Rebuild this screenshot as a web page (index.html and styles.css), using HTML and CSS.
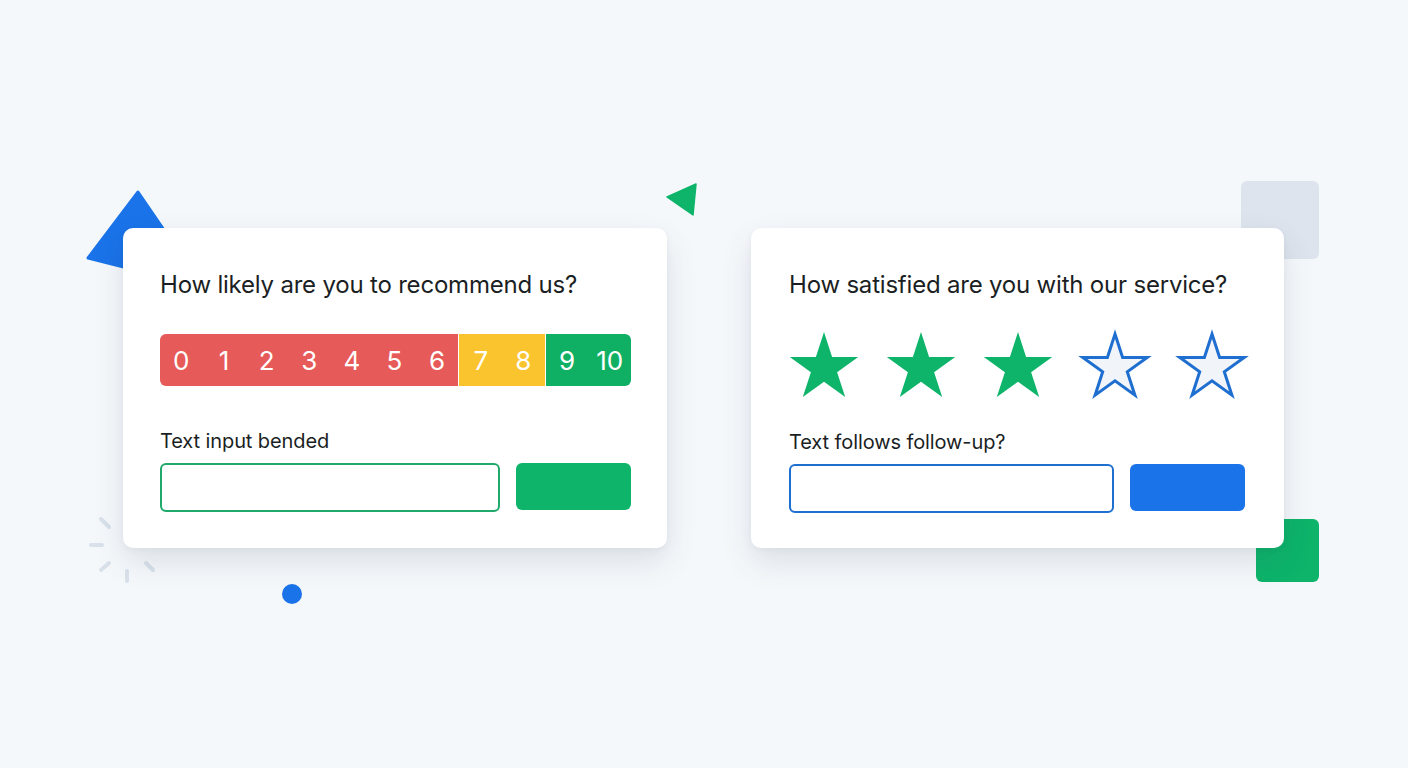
FILE: index.html
```html
<!DOCTYPE html>
<html lang="en">
<head>
    <meta charset="UTF-8">
    <meta name="viewport" content="width=device-width, initial-scale=1.0">
    <title>Survey Widgets</title>
    <link rel="stylesheet" href="styles.css">
</head>
<body>
    <div class="stage">
        <!-- decorative shapes behind the cards -->
        <svg class="deco" width="1408" height="768" viewBox="0 0 1408 768">
            <polygon points="138,192 88,258 203,287" fill="#1a73e8" stroke="#1a73e8" stroke-width="3" stroke-linejoin="round"/>
            <polygon points="667,197 696,184 693,215" fill="#0db46a" stroke="#0db46a" stroke-width="1.5" stroke-linejoin="round"/>
            <rect x="1241" y="181" width="78" height="78" rx="6" fill="#dde4ed"/>
            <rect x="1256" y="519" width="63" height="63" rx="6" fill="#0db46a"/>
            <g stroke="#d9e1ea" stroke-width="4" stroke-linecap="round">
                <line x1="101" y1="519" x2="109" y2="527"/>
                <line x1="91" y1="545" x2="102" y2="545"/>
                <line x1="101" y1="570" x2="109" y2="563"/>
                <line x1="127" y1="571" x2="127" y2="581"/>
                <line x1="146" y1="563" x2="153" y2="570"/>
            </g>
            <circle cx="292" cy="594" r="10" fill="#1a73e8"/>
        </svg>

        <div class="cards">
            <div class="card card-nps">
                <div class="question">How likely are you to recommend us?</div>
                <div class="scale">
                    <div class="segment red">
                        <span>0</span><span>1</span><span>2</span><span>3</span><span>4</span><span>5</span><span>6</span>
                    </div>
                    <div class="segment yellow">
                        <span>7</span><span>8</span>
                    </div>
                    <div class="segment green">
                        <span>9</span><span>10</span>
                    </div>
                </div>
                <div class="label">Text input bended</div>
                <div class="answer-row">
                    <div class="text-box green-box"></div>
                    <div class="submit green-btn"></div>
                </div>
            </div>

            <div class="card card-csat">
                <div class="question">How satisfied are you with our service?</div>
                <div class="stars">
                    <svg class="star" viewBox="0 0 70 68"><polygon class="filled" points="35,1 43.1,25.9 69.2,25.9 48.1,41.3 56.2,66.1 35,50.8 13.8,66.1 21.9,41.3 0.8,25.9 26.9,25.9"/></svg>
                    <svg class="star" viewBox="0 0 70 68"><polygon class="filled" points="35,1 43.1,25.9 69.2,25.9 48.1,41.3 56.2,66.1 35,50.8 13.8,66.1 21.9,41.3 0.8,25.9 26.9,25.9"/></svg>
                    <svg class="star" viewBox="0 0 70 68"><polygon class="filled" points="35,1 43.1,25.9 69.2,25.9 48.1,41.3 56.2,66.1 35,50.8 13.8,66.1 21.9,41.3 0.8,25.9 26.9,25.9"/></svg>
                    <svg class="star" viewBox="0 0 70 68"><polygon class="empty" points="35,3 42.6,26.4 67.2,26.4 47.3,40.8 54.9,64.2 35,49.8 15.1,64.2 22.7,40.8 2.8,26.4 27.4,26.4"/></svg>
                    <svg class="star" viewBox="0 0 70 68"><polygon class="empty" points="35,3 42.6,26.4 67.2,26.4 47.3,40.8 54.9,64.2 35,49.8 15.1,64.2 22.7,40.8 2.8,26.4 27.4,26.4"/></svg>
                </div>
                <div class="label">Text follows follow-up?</div>
                <div class="answer-row">
                    <div class="text-box blue-box"></div>
                    <div class="submit blue-btn"></div>
                </div>
            </div>
        </div>
    </div>
</body>
</html>
```

FILE: styles.css
```css
body {
    margin: 0;
    padding: 0;
    font-family: Inter, "Noto Sans", Arial, sans-serif;
    background-color: #f5f8fb;
    color: #1b1f24;
    overflow: hidden;
}

.stage {
    position: relative;
    width: 1408px;
    height: 768px;
}

.deco {
    position: absolute;
    top: 0;
    left: 0;
    z-index: 0;
}

.cards {
    position: relative;
    z-index: 1;
    display: flex;
    align-items: flex-start;
    gap: 84px;
    padding: 228px 0 0 123px;
}

.card {
    background: white;
    border-radius: 10px;
    height: 320px;
    box-sizing: border-box;
    padding: 42px 36px 0 37px;
    box-shadow: 0 14px 32px rgba(40, 55, 80, 0.12), 0 2px 6px rgba(40, 55, 80, 0.05);
}

.card-nps {
    width: 544px;
}

.card-csat {
    width: 533px;
    padding-left: 38px;
    padding-right: 39px;
}

.question {
    font-size: 24px;
    line-height: 30px;
    letter-spacing: -0.2px;
}

.label {
    font-size: 20px;
    line-height: 24px;
    letter-spacing: -0.1px;
}

/* NPS scale */
.scale {
    display: flex;
    gap: 1px;
    height: 52px;
    margin-top: 34px;
}

.segment {
    display: flex;
    color: white;
    font-size: 26px;
}

.segment span {
    flex: 1;
    display: flex;
    align-items: center;
    justify-content: center;
}

.segment.red {
    flex: 7;
    background: #e65a59;
    border-radius: 6px 0 0 6px;
}

.segment.yellow {
    flex: 2;
    background: #f9c42e;
}

.segment.green {
    flex: 2;
    background: #10b064;
    border-radius: 0 6px 6px 0;
}

.card-nps .label {
    margin-top: 43px;
}

/* stars */
.stars {
    display: flex;
    gap: 27px;
    margin-top: 31px;
    height: 68px;
}

.star {
    width: 70px;
    height: 68px;
    overflow: visible;
}

.star .filled {
    fill: #0db46a;
}

.star .empty {
    fill: #f1f5f9;
    stroke: #1f6fd0;
    stroke-width: 3;
    stroke-linejoin: miter;
}

.card-csat .label {
    margin-top: 31px;
}

/* text input + button */
.answer-row {
    display: flex;
    align-items: flex-start;
    gap: 16px;
    margin-top: 10px;
}

.text-box {
    flex: 1;
    height: 49px;
    box-sizing: border-box;
    border-radius: 6px;
    background: white;
}

.green-box {
    border: 2px solid #21a86b;
}

.blue-box {
    border: 2px solid #1f6fd0;
}

.submit {
    width: 115px;
    height: 47px;
    border-radius: 6px;
}

.green-btn {
    background: #0db46a;
}

.blue-btn {
    background: #1a73e8;
}
```
